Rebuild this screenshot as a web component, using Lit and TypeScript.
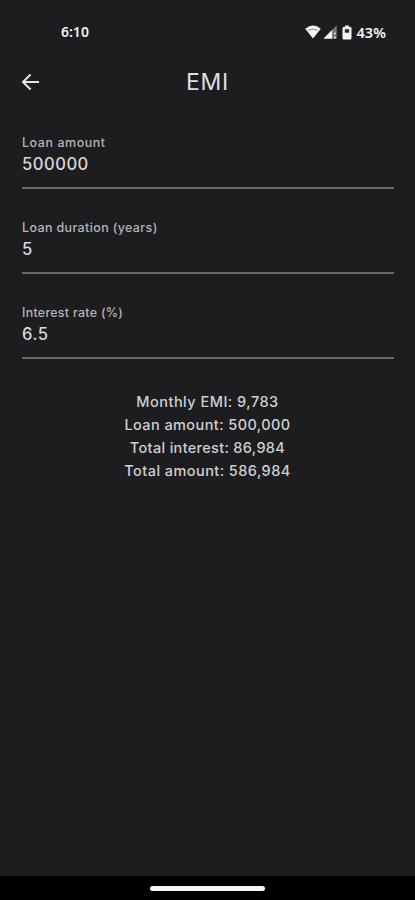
import { LitElement, html, css } from "lit";
import { customElement } from "lit/decorators.js";

const fields = [
  { label: "Loan amount", value: "500000", ls: 0.6 },
  { label: "Loan duration (years)", value: "5", ls: 0.42 },
  { label: "Interest rate (%)", value: "6.5", ls: 0.3 },
];

const results = [
  { text: "Monthly EMI: 9,783", ls: 0.48 },
  { text: "Loan amount: 500,000", ls: 0.42 },
  { text: "Total interest: 86,984", ls: 0.32 },
  { text: "Total amount: 586,984", ls: 0.44 },
];

@customElement("app-root")
export class AppRoot extends LitElement {
  static styles = css`
    :host {
      display: flex;
      flex-direction: column;
      height: 900px;
      box-sizing: border-box;
      background: #1d1d1f;
      color: #dedee0;
      font-family: Inter, "Noto Sans", sans-serif;
      overflow: hidden;
    }
    .status {
      display: flex;
      align-items: center;
      height: 64px;
      padding: 0 29px 0 61px;
      box-sizing: border-box;
      color: #f4f4f4;
      font: 600 14px/20px "Noto Sans", sans-serif;
    }
    .time { flex: 1; }
    .status svg { display: block; }
    .wifi { margin-right: 2px; }
    .signal { margin-right: 5px; }
    .battery { margin-right: 4px; }
    .pct { font-size: 14.5px; line-height: 19px; letter-spacing: 0.1px; }
    .bar {
      display: grid;
      grid-template-columns: 60px 1fr 60px;
      align-items: center;
      height: 36px;
    }
    .back { margin-left: 21px; display: block; }
    h1 {
      margin: 0;
      text-align: center;
      font-size: 23px;
      line-height: 36px;
      font-weight: 400;
      letter-spacing: 0.8px;
    }
    .form {
      display: flex;
      flex-direction: column;
      gap: 30px;
      padding: 34px 21px 0 22px;
    }
    .field {
      height: 55px;
      box-sizing: border-box;
      border-bottom: 2px solid #67666a;
    }
    .label {
      padding-top: 1px;
      font-size: 12.4px;
      line-height: 16px;
      font-weight: 500;
      color: #b5b5b8;
    }
    .value {
      font-size: 16.6px;
      line-height: 26px;
      font-weight: 500;
      letter-spacing: 0.5px;
      color: #d6d6d8;
    }
    .results {
      display: flex;
      flex-direction: column;
      align-items: center;
      padding-top: 31px;
      font-size: 14.5px;
      line-height: 23px;
      font-weight: 500;
      color: #cfcfd1;
      white-space: nowrap;
    }
    .nav {
      margin-top: auto;
      height: 24px;
      display: flex;
      justify-content: center;
      align-items: center;
      background: #000;
    }
    .pill {
      width: 115px;
      height: 5px;
      border-radius: 3px;
      background: #f6f6f6;
    }
  `;

  render() {
    return html`
      <div class="status">
        <span class="time">6:10</span>
        <svg class="wifi" width="16" height="14" viewBox="0 0 16 14">
          <path d="M0.2 3.7Q8 -2.6 15.8 3.7L8 13.4Z" fill="#f4f4f4" />
          <path d="M3.4 5.4Q8 2.6 12.6 5.4" fill="none" stroke="#7c7c7f" stroke-width="0.9" />
        </svg>
        <svg class="signal" width="14" height="14" viewBox="0 0 14 14">
          <path d="M0.3 13.7L9.5 4.5V13.7Z" fill="#f4f4f4" />
          <path d="M9.5 4.5L13.7 0.3V13.7H9.5Z" fill="#77777a" />
          <path d="M11 8.5H13M11 12.5H13" stroke="#ddd" stroke-width="1.5" />
        </svg>
        <svg class="battery" width="10" height="15" viewBox="0 0 10 15">
          <path d="M3 0.5H7V2H8.3Q9.5 2 9.5 3.2V13.3Q9.5 14.5 8.3 14.5H1.7Q0.5 14.5 0.5 13.3V3.2Q0.5 2 1.7 2H3Z" fill="#f4f4f4" />
          <path d="M2.8 4.2H7.2V7.7H2.8Z" fill="#29292b" />
        </svg>
        <span class="pct">43%</span>
      </div>
      <div class="bar">
        <svg class="back" width="19" height="18" viewBox="0 0 19 18">
          <path d="M9.6 1.5L2 9L9.6 16.5M2 9H18" fill="none" stroke="#e4e4e6" stroke-width="2" />
        </svg>
        <h1>EMI</h1>
      </div>
      <div class="form">
        ${fields.map(
          (f) => html`<div class="field">
            <div class="label" style="letter-spacing:${f.ls}px">${f.label}</div>
            <div class="value">${f.value}</div>
          </div>`
        )}
      </div>
      <div class="results">
        ${results.map((r) => html`<div style="letter-spacing:${r.ls}px">${r.text}</div>`)}
      </div>
      <div class="nav"><div class="pill"></div></div>
    `;
  }
}
